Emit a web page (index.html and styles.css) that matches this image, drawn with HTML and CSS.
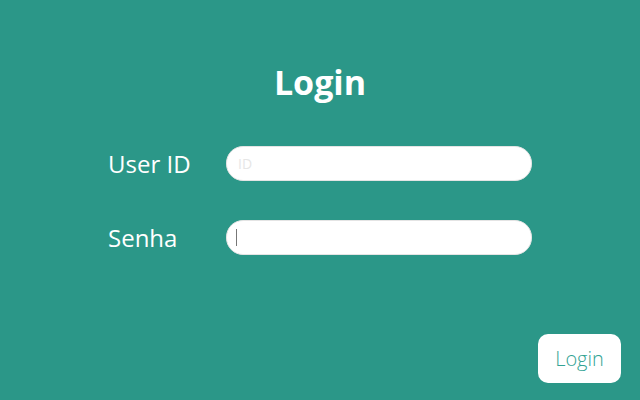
FILE: index.html
```html
<!DOCTYPE html>
<html>
<head>
<meta charset="utf-8">
<link rel="stylesheet" href="styles.css">
</head>
<body>
<main class="page">
  <h1 class="title">Login</h1>
  <form class="form">
    <label class="label" for="uid">User ID</label>
    <input class="field" id="uid" type="text" placeholder="ID">
    <label class="label" for="pwd">Senha</label>
    <div class="field-wrap">
      <input class="field" id="pwd" type="password">
      <span class="caret"></span>
    </div>
  </form>
  <div class="actions">
    <button class="btn" type="button">Login</button>
  </div>
</main>
</body>
</html>
```
FILE: styles.css
```css
html, body {
  margin: 0;
  height: 100%;
}
body {
  background: #2b9788;
  font-family: "Open Sans", "Noto Sans", sans-serif;
  color: #fff;
}
.page {
  height: 400px;
  box-sizing: border-box;
  padding-top: 60px;
  display: flex;
  flex-direction: column;
}
.title {
  margin: 0;
  text-align: center;
  font-size: 34px;
  font-weight: 700;
  line-height: 44px;
}
.form {
  margin: 42px 0 0 108px;
  display: grid;
  grid-template-columns: 118px 306px;
  row-gap: 39px;
  align-items: center;
}
.label {
  font-size: 24px;
  line-height: 34px;
}
.field-wrap {
  position: relative;
}
.field {
  display: block;
  width: 306px;
  height: 35px;
  box-sizing: border-box;
  border: 1px solid #e4e4e4;
  border-radius: 17px;
  background: #fff;
  padding: 0 11px;
  font-family: inherit;
  font-size: 14px;
  outline: none;
}
.field::placeholder {
  color: #e6e6e6;
}
.caret {
  position: absolute;
  left: 10px;
  top: 9px;
  width: 1px;
  height: 17px;
  background: #777;
}
.actions {
  margin-top: auto;
  display: flex;
  justify-content: flex-end;
  padding: 0 19px 17px 0;
}
.btn {
  width: 83px;
  height: 49px;
  border: none;
  border-radius: 10px;
  background: #fff;
  color: #33a394;
  font-family: inherit;
  font-size: 20px;
  font-weight: 300;
}
```
